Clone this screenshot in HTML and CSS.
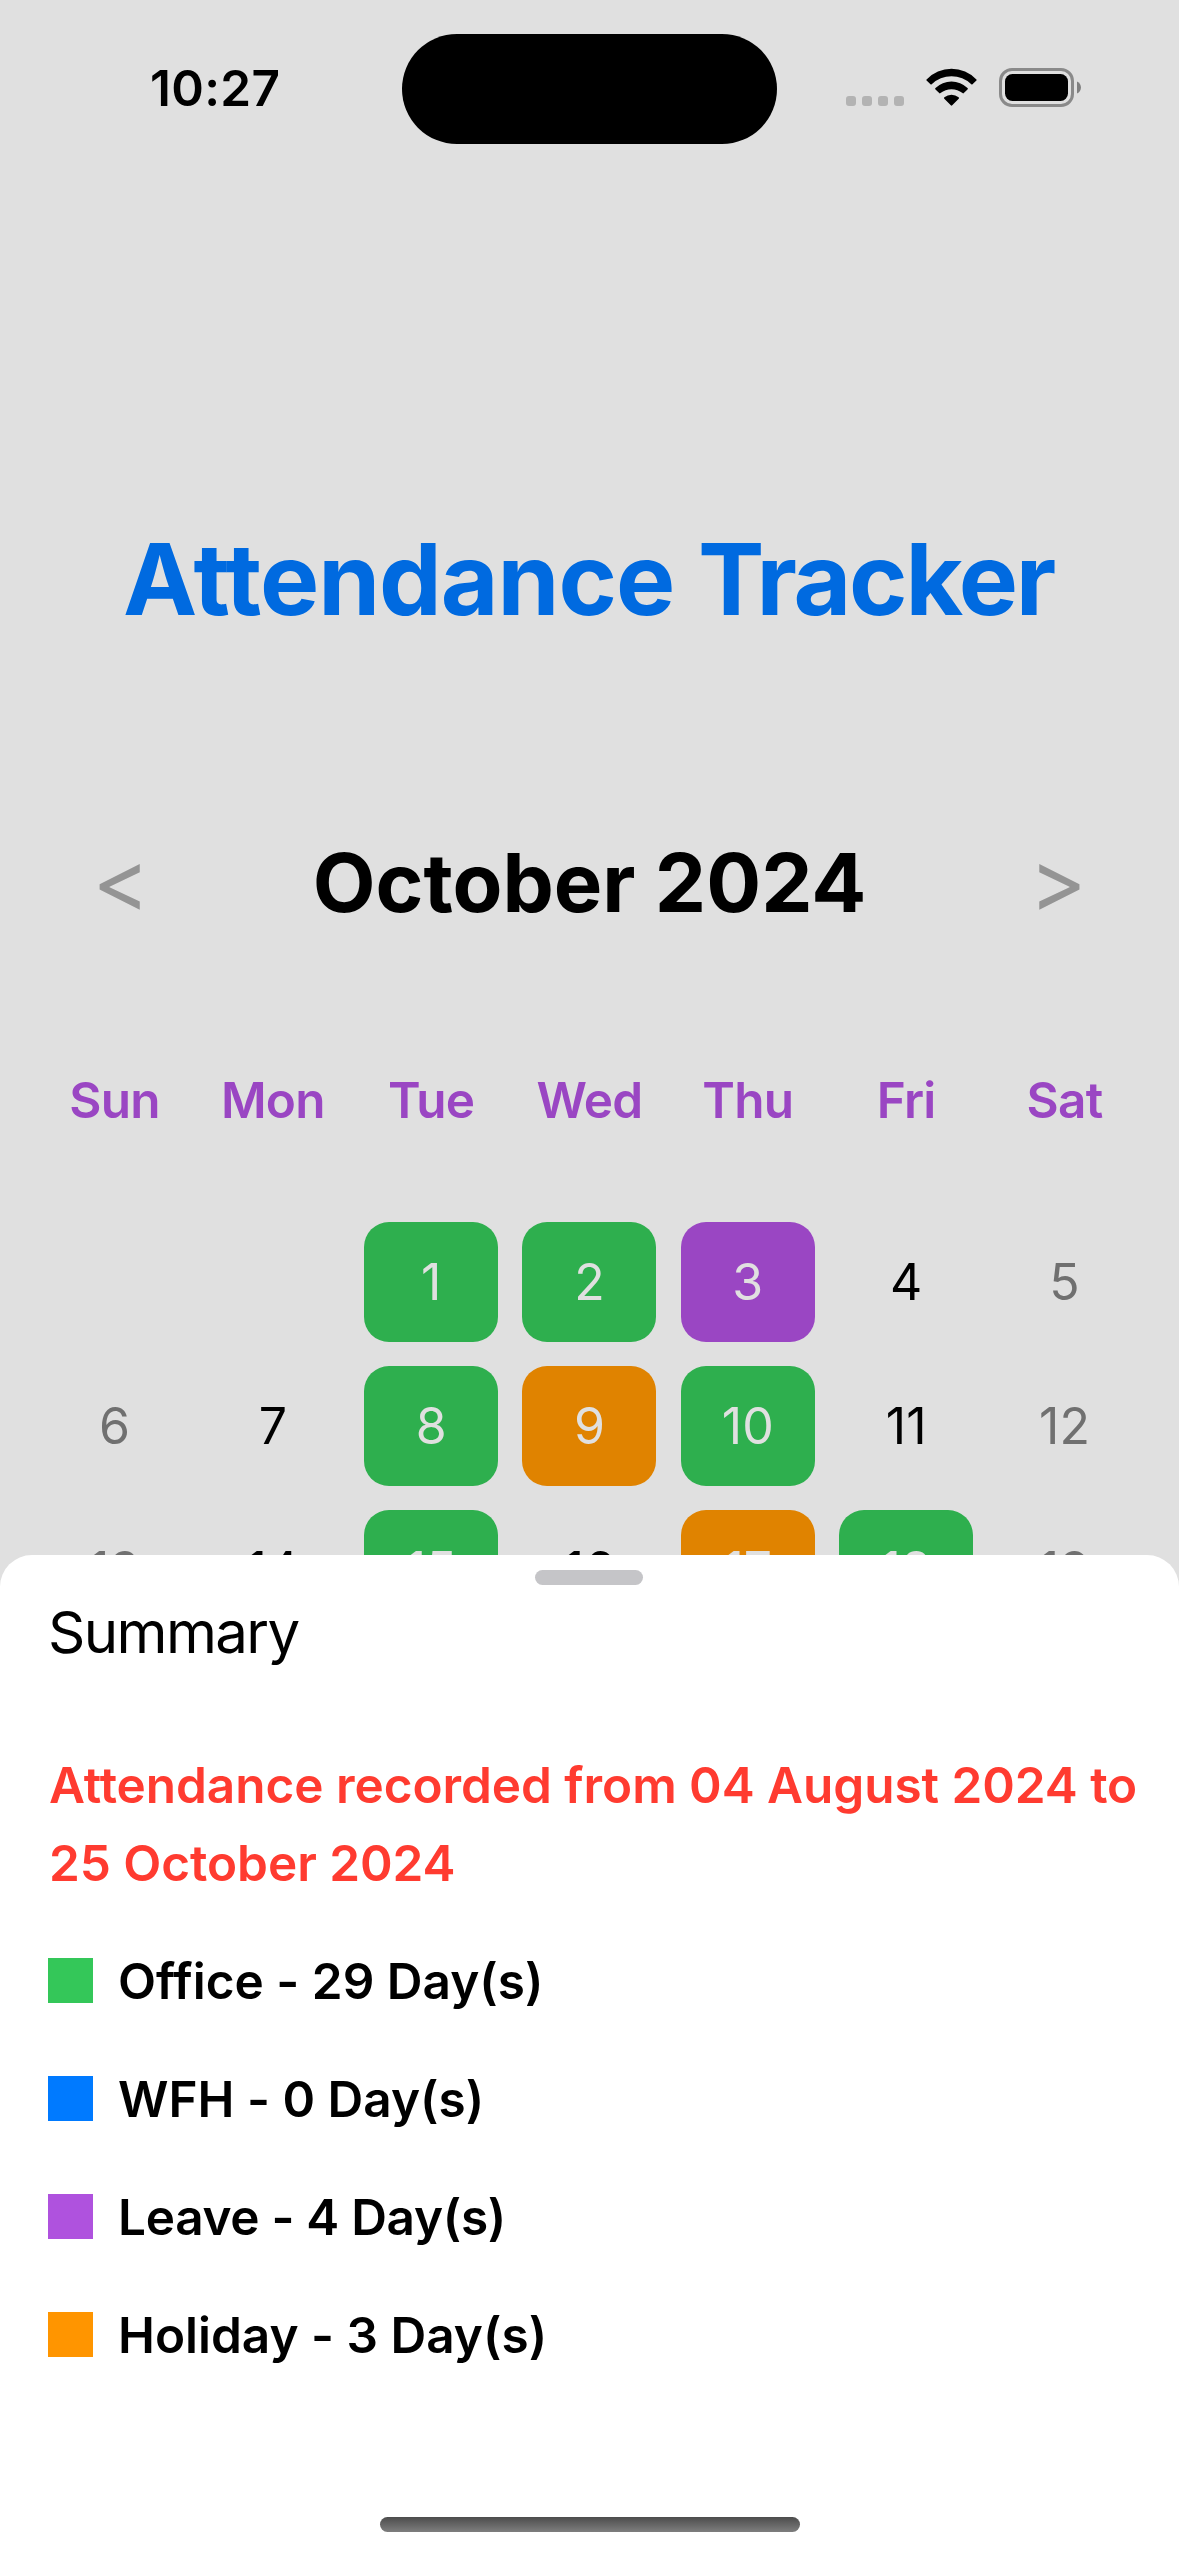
FILE: index.html
```html
<!DOCTYPE html>
<html lang="en">
<head>
<meta charset="utf-8">
<title>Attendance Tracker</title>
<link rel="stylesheet" href="styles.css">
</head>
<body>
<main class="screen">
  <header class="status">
    <span class="time">10:27</span>
    <span class="island"></span>
    <div class="indicators">
      <svg class="cell" width="58" height="10" viewBox="0 0 58 10" fill="#b3b3b3"><rect width="10" height="10" rx="3"/><rect x="16" width="10" height="10" rx="3"/><rect x="32" width="10" height="10" rx="3"/><rect x="48" width="10" height="10" rx="3"/></svg>
      <svg class="wifi" width="53" height="39" viewBox="0 0 53 39"><path d="M1.600 11.400A34.400 34.400 0 0 1 51.400 11.400Q52 12 51.400 12.600L47.500 16.300Q46.900 16.800 46.300 16.300A28.500 28.500 0 0 0 6.700 16.300Q6.100 16.800 5.500 16.300L1.600 12.600Q1 12 1.600 11.400ZM10.500 20A23 23 0 0 1 42.500 20Q43.200 20.700 42.500 21.400L38.800 25.100Q38.200 25.700 37.500 25.100A17.500 17.500 0 0 0 15.500 25.100Q14.800 25.700 14.200 25.100L10.500 21.400Q9.800 20.700 10.500 20ZM19.400 29.300A11 11 0 0 1 33.600 29.300Q34.500 30 33.700 30.800L27.200 37.300Q26.500 38 25.800 37.300L19.300 30.800Q18.500 30 19.400 29.300Z"/></svg>
      <svg class="battery" width="82" height="40" viewBox="0 0 82 40"><rect x="1.500" y="1.500" width="72" height="36" rx="11.500" fill="none" stroke="#8a8a8a" stroke-width="3"/><rect x="6" y="6" width="63" height="27" rx="7.500"/><path d="M78 13.500C83.300 15.500 83.300 23.500 78 25.500Z" fill="#808080"/></svg>
    </div>
  </header>
  <h1 class="title"><span class="title-start">Attendance</span> <span class="title-end">Tracker</span></h1>
  <nav class="month"><span class="arrow">&lt;</span><h2 class="month-name">October 2024</h2><span class="arrow">&gt;</span></nav>
  <div class="weekdays"><span>Sun</span><span>Mon</span><span>Tue</span><span>Wed</span><span>Thu</span><span>Fri</span><span>Sat</span></div>
  <div class="days">
    <span></span><span></span><span class="day office">1</span><span class="day office">2</span><span class="day leave">3</span><span class="day">4</span><span class="day weekend">5</span>
    <span class="day weekend">6</span><span class="day">7</span><span class="day office">8</span><span class="day holiday">9</span><span class="day office">10</span><span class="day">11</span><span class="day weekend">12</span>
    <span class="day weekend">13</span><span class="day">14</span><span class="day office">15</span><span class="day">16</span><span class="day holiday">17</span><span class="day office">18</span><span class="day weekend">19</span>
  </div>
  <section class="sheet">
    <div class="grabber"></div>
    <h3 class="heading">Summary</h3>
    <p class="range">Attendance recorded from 04 August 2024 to<br>25 October 2024</p>
    <ul class="legend">
      <li><i class="swatch green"></i><span>Office - 29 Day(s)</span></li>
      <li><i class="swatch blue"></i><span>WFH - 0 Day(s)</span></li>
      <li><i class="swatch purple"></i><span class="tight">Leave - 4 Day(s)</span></li>
      <li><i class="swatch orange"></i><span>Holiday - 3 Day(s)</span></li>
    </ul>
    <div class="home"></div>
  </section>
</main>
</body>
</html>
```
FILE: styles.css
```css
* { box-sizing: border-box; }
body { margin: 0; font-family: Inter, "Liberation Sans", sans-serif; font-variant-ligatures: none; font-feature-settings: "calt" 0, "liga" 0; color: #000; }
h1, h2, h3, p, ul { margin: 0; padding: 0; }
.screen { position: relative; width: 1179px; height: 2556px; overflow: hidden; background: #e0e0e0; display: flex; flex-direction: column; }
.status { height: 176px; flex: none; display: grid; grid-template-columns: 402px 375px 402px; }
.time { padding: 56px 0 0 150px; font-size: 49.5px; line-height: 64px; font-weight: 600; letter-spacing: 0.3px; }
.island { margin-top: 34px; height: 110px; border-radius: 55px; background: #000; }
.indicators { display: flex; padding: 68px 0 0 69px; }
.cell { margin-top: 28px; }
.wifi { margin-left: 21px; }
.battery { margin-left: 21px; }
.title { height: 120px; margin-top: 343px; padding-right: 2px; line-height: 120px; text-align: center; font-size: 99.5px; font-weight: 700; color: #006ae0; }
.title-start { letter-spacing: -1px; }
.title-end { letter-spacing: -2.2px; }
.month { height: 100px; margin-top: 193px; padding: 0 96px; display: flex; justify-content: space-between; align-items: center; }
.arrow { width: 50px; padding-bottom: 3px; display: flex; justify-content: center; font-size: 87px; line-height: 97px; color: #949494; }
.month-name { font-size: 81.5px; font-weight: 700; }
.weekdays, .days { display: grid; grid-template-columns: repeat(7, 134px); column-gap: 24.33px; padding-left: 47.5px; text-align: center; }
.weekdays { margin-top: 136px; font-size: 49.5px; line-height: 64px; font-weight: 600; letter-spacing: -0.8px; color: #9a46c3; }
.days { margin-top: 90px; row-gap: 24px; }
.day { height: 120px; border-radius: 25px; line-height: 120px; font-size: 50px; }
.office { background: #2eaf4e; color: #e0e0e0; }
.leave { background: #9a46c3; color: #e0e0e0; }
.holiday { background: #e08300; color: #e0e0e0; }
.weekend { color: #707070; }
.sheet { position: absolute; left: 0; right: 0; top: 1555px; bottom: 0; padding: 15px 48px 0; background: #fff; border-radius: 32px 32px 0 0; display: flex; flex-direction: column; }
.grabber { width: 108px; height: 15px; margin-right: 1px; border-radius: 8px; background: #c5c5c8; align-self: center; }
.heading { margin-top: 11px; font-size: 58.2px; line-height: 72px; font-weight: 400; letter-spacing: -1.6px; }
.range { margin-top: 78px; padding-left: 1px; font-size: 49.5px; line-height: 78px; font-weight: 600; letter-spacing: -0.05px; color: #ff3b30; white-space: nowrap; }
.legend { margin-top: 47px; list-style: none; display: flex; flex-direction: column; gap: 55px; }
.legend li { display: flex; align-items: center; gap: 25px; height: 63px; font-size: 49.5px; font-weight: 600; }
.tight { letter-spacing: -0.3px; }
.swatch { width: 45px; height: 45px; }
.green { background: #34c759; }
.blue { background: #007aff; }
.purple { background: #af52de; }
.orange { background: #ff9500; }
.home { width: 420px; height: 15px; margin: auto auto 24px; border-radius: 8px; background: linear-gradient(#4c4c4c, #7e7e7e); }
```
